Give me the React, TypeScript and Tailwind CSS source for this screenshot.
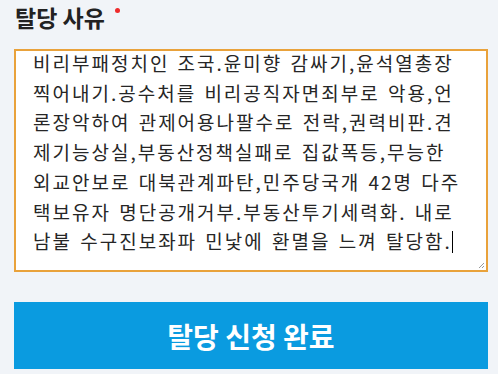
const lines = [
  '비리부패정치인 조국.윤미향 감싸기,윤석열총장',
  '찍어내기.공수처를 비리공직자면죄부로 악용,언',
  '론장악하여 관제어용나팔수로 전락,권력비판.견',
  '제기능상실,부동산정책실패로 집값폭등,무능한',
  '외교안보로 대북관계파탄,민주당국개 42명 다주',
  '택보유자 명단공개거부.부동산투기세력화. 내로',
  '남불 수구진보좌파 민낯에 환멸을 느껴 탈당함.'
]

const font = { fontFamily: '"Noto Sans CJK KR", "Noto Sans", sans-serif' }

export default function App() {
  return (
    <div
      className="h-[374px] w-[498px] overflow-hidden bg-[#f1f4f8] pl-[14px]"
      style={font}
    >
      <div className="flex h-[34px] items-start pl-[1px]">
        <span className="text-[23px] font-bold leading-[34px] text-[#222]">
          탈당 사유
        </span>
        <span className="ml-[10px] mt-[8px] h-[5px] w-[5px] rounded-full bg-[#ee2b2b]" />
      </div>

      <div className="relative mt-[15px] h-[223px] w-[474px] overflow-hidden border-2 border-[#e9a23b] bg-white pl-[17px]">
        <div className="-mt-[3px] text-[19px] leading-[29.7px] tracking-[2px] [word-spacing:2px] text-[#262626]">
          {lines.map((line, i) => (
            <div key={i} className="whitespace-pre">
              {line}
              {i === lines.length - 1 && (
                <span className="inline-block h-[22px] w-[1px] translate-y-[4px] bg-black" />
              )}
            </div>
          ))}
        </div>
        <svg
          className="absolute bottom-[1px] right-[1px] h-[8px] w-[8px]"
          viewBox="0 0 8 8"
        >
          <path d="M7 2 L2 7 M7 5 L5 7" stroke="#9a9a9a" strokeWidth="1" />
        </svg>
      </div>

      <button className="mt-[30px] flex h-[67px] w-[474px] items-center justify-center bg-[#0a9be0] text-[28px] font-bold text-white">
        탈당 신청 완료
      </button>
    </div>
  )
}
